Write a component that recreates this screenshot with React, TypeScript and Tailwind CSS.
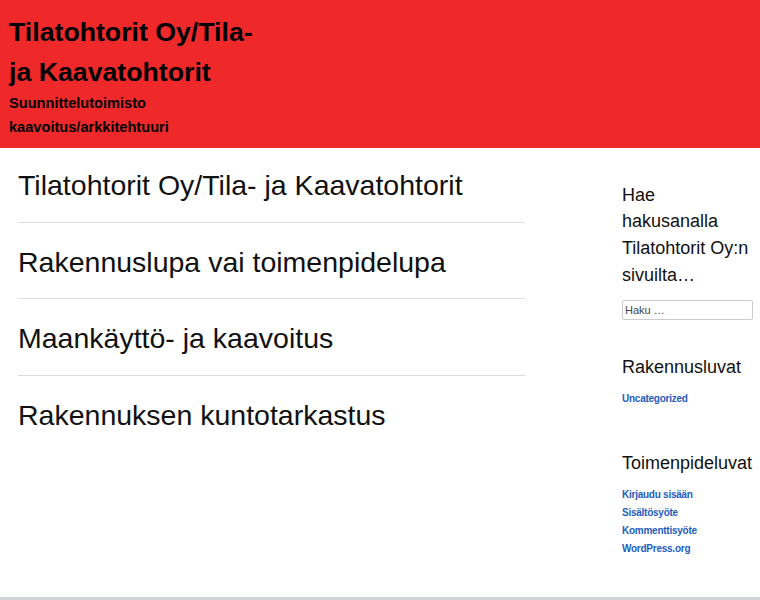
import React from "react";

const font = { fontFamily: '"Liberation Sans", Arial, Helvetica, sans-serif' };

export default function App() {
  const posts = [
    "Tilatohtorit Oy/Tila- ja Kaavatohtorit",
    "Rakennuslupa vai toimenpidelupa",
    "Maankäyttö- ja kaavoitus",
    "Rakennuksen kuntotarkastus",
  ];
  const links = ["Kirjaudu sisään", "Sisältösyöte", "Kommenttisyöte", "WordPress.org"];
  return (
    <div className="w-[760px] bg-white text-[#111]" style={font}>
      <header className="h-[148px] bg-[#ef2829] pl-[9px] pt-[12px]">
        <div className="w-[266px]">
          <h1 className="text-[26.7px] font-bold leading-[40px] text-black">
            Tilatohtorit Oy/Tila- ja Kaavatohtorit
          </h1>
          <p className="text-[14.6px] font-bold leading-[23.5px] text-black">
            Suunnittelutoimisto kaavoitus/arkkitehtuuri
          </p>
        </div>
      </header>
      <div className="flex h-[449px]">
        <main className="ml-[18px] w-[507px]">
          {posts.map((p, i) => (
            <article
              key={p}
              className={
                i === 0
                  ? "pt-[21.3px] pb-[20.5px] border-b border-[#dddddd]"
                  : i === posts.length - 1
                  ? "pt-[23px] pb-[20.5px]"
                  : "pt-[23px] pb-[20.5px] border-b border-[#dddddd]"
              }
            >
              <h2 className="text-[28.5px] font-normal leading-[32px] text-[#111]">{p}</h2>
            </article>
          ))}
        </main>
        <aside className="ml-[97px] w-[131px] pt-[33.5px]">
          <h3 className="w-[128px] text-[18px] leading-[26.7px] text-[#111]">
            Hae hakusanalla Tilatohtorit Oy:n sivuilta…
          </h3>
          <input
            type="search"
            placeholder="Haku …"
            className="mt-[11.7px] block h-[20px] w-[131px] rounded-[2px] border border-[#cccccc] px-[2px] text-[11px] text-[#333] placeholder:text-[#444] outline-none"
            style={font}
          />
          <h3 className="mt-[33.5px] text-[18px] leading-[27px] text-[#111]">Rakennusluvat</h3>
          <ul className="mt-[9.4px]">
            <li className="text-[10px] tracking-[-0.25px] font-bold leading-[18px] text-[#1e5cbf]">Uncategorized</li>
          </ul>
          <h3 className="mt-[42.6px] text-[18px] leading-[27px] text-[#111]">Toimenpideluvat</h3>
          <ul className="mt-[8.4px]">
            {links.map((l) => (
              <li key={l} className="text-[10px] tracking-[-0.25px] font-bold leading-[18px] text-[#1e5cbf]">
                {l}
              </li>
            ))}
          </ul>
        </aside>
      </div>
      <footer className="h-[60px] border-t-[3px] border-[#cfd3d6] bg-white" />
    </div>
  );
}
